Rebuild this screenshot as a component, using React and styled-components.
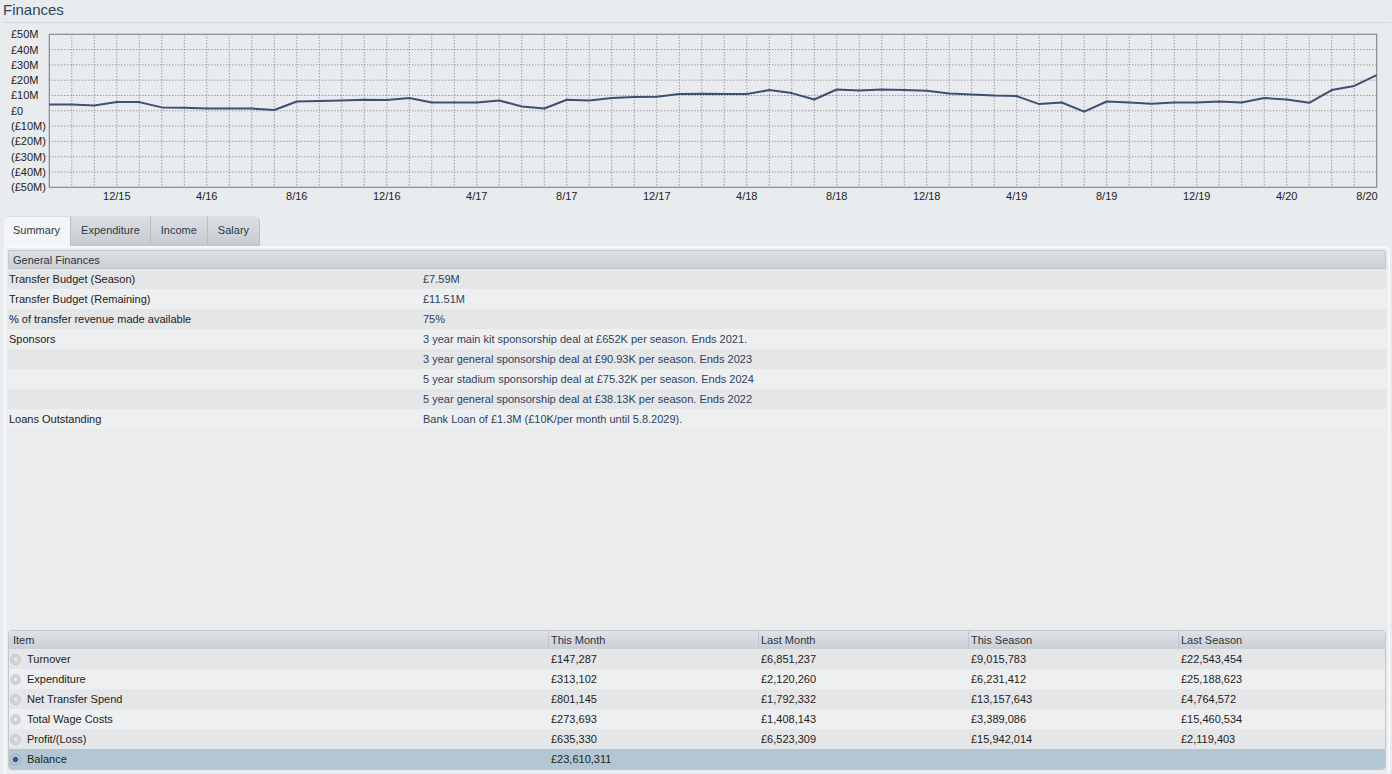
import React from 'react';
import styled, { createGlobalStyle } from 'styled-components';

const GlobalStyle = createGlobalStyle`
  html, body {
    margin: 0;
    padding: 0;
    background: #e9ecef;
  }
  body {
    font-family: "Liberation Sans", Arial, sans-serif;
    font-size: 11px;
    color: #222;
    overflow: hidden;
  }
`;

// month-end balance in £M, 9/15 .. 8/20
const history = [
  4.1, 4.1, 3.5, 5.7, 5.7, 2.2, 2.0, 1.5, 1.5, 1.5, 0.5, 6.1,
  6.5, 6.7, 7.2, 7.0, 8.3, 5.4, 5.4, 5.4, 6.7, 2.8, 1.5, 7.2,
  6.7, 8.3, 9.0, 9.2, 10.9, 11.1, 10.9, 10.9, 13.5, 11.6, 7.4, 13.9,
  13.3, 13.9, 13.5, 13.1, 11.3, 10.7, 10.0, 9.6, 4.4, 5.4, -0.5, 6.1,
  5.4, 4.6, 5.4, 5.4, 6.1, 5.4, 8.3, 7.4, 5.2, 13.5, 16.3, 23.3,
];

const yLabels = ['£50M', '£40M', '£30M', '£20M', '£10M', '£0', '(£10M)', '(£20M)', '(£30M)', '(£40M)', '(£50M)'];

const general = [
  ['Transfer Budget (Season)', '£7.59M'],
  ['Transfer Budget (Remaining)', '£11.51M'],
  ['% of transfer revenue made available', '75%'],
  ['Sponsors', '3 year main kit sponsorship deal at £652K per season. Ends 2021.'],
  ['', '3 year general sponsorship deal at £90.93K per season. Ends 2023'],
  ['', '5 year stadium sponsorship deal at £75.32K per season. Ends 2024'],
  ['', '5 year general sponsorship deal at £38.13K per season. Ends 2022'],
  ['Loans Outstanding', 'Bank Loan of £1.3M (£10K/per month until 5.8.2029).'],
];

const items = [
  ['Turnover', '£147,287', '£6,851,237', '£9,015,783', '£22,543,454'],
  ['Expenditure', '£313,102', '£2,120,260', '£6,231,412', '£25,188,623'],
  ['Net Transfer Spend', '£801,145', '£1,792,332', '£13,157,643', '£4,764,572'],
  ['Total Wage Costs', '£273,693', '£1,408,143', '£3,389,086', '£15,460,534'],
  ['Profit/(Loss)', '£635,330', '£6,523,309', '£15,942,014', '£2,119,403'],
  ['Balance', '£23,610,311', '', '', ''],
];

const Page = styled.div`
  width: 1392px;
  height: 774px;
  overflow: hidden;
`;

const TitleBar = styled.div`
  margin: 0 1px 0 3px;
  height: 22px;
  border-bottom: 1px solid #d3d8dd;
`;

const Title = styled.h1`
  margin: 0;
  font-size: 15px;
  font-weight: normal;
  line-height: 20px;
  color: #2f4561;
`;

const ChartSvg = styled.svg`
  display: block;
  width: 1392px;
  height: 193px;
  font-family: "Liberation Sans", Arial, sans-serif;
  font-size: 11px;
`;

const TabList = styled.div`
  display: flex;
  margin-left: 4px;
  height: 30px;
`;

const Tab = styled.div`
  height: 30px;
  line-height: 27px;
  padding: 0 10px;
  box-sizing: border-box;
  color: #2d3a4b;
  border-top: 1px solid #d9dde1;
  border-right: 1px solid #b9bfc6;
  background: ${p => (p.$active ? '#f4f5f6' : 'linear-gradient(#dcdfe3, #c7ccd1)')};
  border-bottom: ${p => (p.$active ? 'none' : '1px solid #c0c5cb')};
  &:first-child {
    padding-left: 9px;
    border-radius: 6px 0 0 0;
  }
  &:last-child {
    border-radius: 0 6px 0 0;
  }
`;

const Panel = styled.div`
  margin: 0 2px 0 4px;
  height: 530px;
  box-sizing: border-box;
  border: 2px solid #f7f8f9;
  border-radius: 0 6px 0 0;
  background: #eaeced;
  padding: 2px 2px 4px;
  display: flex;
  flex-direction: column;
`;

const SectionHead = styled.div`
  height: 19px;
  line-height: 18px;
  box-sizing: border-box;
  padding-left: 4px;
  background: linear-gradient(#dde0e4, #cbd0d6);
  border: 1px solid #c2c7cd;
  border-radius: 0 3px 0 0;
  color: #2a3340;
`;

const InfoBody = styled.div`
  display: flex;
  flex-direction: column;
`;

const InfoRow = styled.div`
  display: grid;
  grid-template-columns: 415px 1fr;
  height: 20px;
  line-height: 20px;
  background: #eeeff0;
  &:nth-child(odd) {
    background: #e4e6e8;
  }
`;

const InfoLabel = styled.div`
  padding-left: 1px;
  color: #222;
`;

const InfoValue = styled.div`
  color: #2f3f5c;
`;

const ItemsTable = styled.div`
  margin-top: auto;
  border: 1px solid #c3c8ce;
  border-radius: 4px;
  overflow: hidden;
`;

const cols = '539px 210px 210px 210px 1fr';

const HeadRow = styled.div`
  display: grid;
  grid-template-columns: ${cols};
  height: 18px;
  line-height: 18px;
  background: linear-gradient(#dfe2e6, #cbd0d6);
  border-bottom: 1px solid #c2c7cd;
  margin-bottom: -1px;
  color: #2a3340;
`;

const HeadCell = styled.div`
  padding-left: 2px;
  border-left: 1px solid #bfc5cc;
  &:first-child {
    border-left: none;
    padding-left: 4px;
  }
`;

const ItemRow = styled.div`
  display: grid;
  grid-template-columns: ${cols};
  height: 20px;
  line-height: 20px;
  background: ${p => (p.$selected ? '#b3c6d4' : p.$odd ? '#e4e6e8' : '#eeeff0')};
  color: #222;
`;

const ItemName = styled.div`
  display: flex;
  align-items: center;
  gap: 6px;
  padding-left: 1px;
  svg {
    display: block;
  }
`;

const ItemValue = styled.div`
  padding-left: 3px;
`;

function Radio({ checked }) {
  return (
    <svg width="11" height="11" viewBox="0 0 11 11">
      <circle cx="5.5" cy="5.5" r="4.8" fill="#e3e4e5" stroke={checked ? '#8596ab' : '#b3b5b8'} strokeWidth="1" />
      <circle
        cx="5.5"
        cy="5.5"
        r="2.6"
        fill={checked ? '#3a5a92' : '#ebeced'}
        stroke={checked ? '#3a5a92' : '#b9bbbe'}
        strokeWidth="1"
      />
    </svg>
  );
}

function FinanceChart() {
  const left = 49.3;
  const right = 1376.7;
  const top = 11.3;
  const bottom = 164.3;
  const w = right - left;
  const h = bottom - top;
  const xAt = k => left + (k * w) / (history.length - 1);
  const yAt = v => top + ((50 - v) / 100) * h;

  const months = ['12', '4', '8'];
  const xTicks = [];
  for (let i = 0; i < 14; i++) {
    const m = months[i % 3];
    const yr = 15 + Math.floor((i + 2) / 3);
    xTicks.push({ k: 3 + 4 * i, text: `${m}/${yr}` });
  }

  const points = history.map((v, k) => `${xAt(k).toFixed(1)},${yAt(v).toFixed(1)}`).join(' ');

  return (
    <ChartSvg viewBox="0 0 1392 193">
      {Array.from({ length: 58 }, (_, i) => (
        <line key={'v' + i} x1={xAt(i + 1)} x2={xAt(i + 1)} y1={top} y2={bottom} stroke="#777" strokeDasharray="1 2" />
      ))}
      {Array.from({ length: 9 }, (_, j) => (
        <line key={'h' + j} x1={left} x2={right} y1={top + ((j + 1) * h) / 10} y2={top + ((j + 1) * h) / 10} stroke="#777" strokeDasharray="1 2" />
      ))}
      <rect x={left} y={top} width={w} height={h} fill="none" stroke="#8a8a8a" strokeWidth="1.2" />
      {yLabels.map((t, j) => (
        <text key={t} x="11" y={top + (j * h) / 10} dy="0.36em" fill="#222">
          {t}
        </text>
      ))}
      {xTicks.map(t => (
        <text key={t.text} x={xAt(t.k)} y="176.5" textAnchor="middle" fill="#222">
          {t.text}
        </text>
      ))}
      <text x={right + 1} y="176.5" textAnchor="end" fill="#222">8/20</text>
      <polyline points={points} fill="none" stroke="#3c5171" strokeWidth="2" strokeLinejoin="round" />
    </ChartSvg>
  );
}

export default function App() {
  return (
    <Page>
      <GlobalStyle />
      <TitleBar>
        <Title>Finances</Title>
      </TitleBar>
      <FinanceChart />
      <TabList>
        <Tab $active>Summary</Tab>
        <Tab>Expenditure</Tab>
        <Tab>Income</Tab>
        <Tab>Salary</Tab>
      </TabList>
      <Panel>
        <SectionHead>General Finances</SectionHead>
        <InfoBody>
          {general.map(([label, value], i) => (
            <InfoRow key={i}>
              <InfoLabel>{label}</InfoLabel>
              <InfoValue>{value}</InfoValue>
            </InfoRow>
          ))}
        </InfoBody>
        <ItemsTable>
          <HeadRow>
            <HeadCell>Item</HeadCell>
            <HeadCell>This Month</HeadCell>
            <HeadCell>Last Month</HeadCell>
            <HeadCell>This Season</HeadCell>
            <HeadCell>Last Season</HeadCell>
          </HeadRow>
          {items.map(([name, ...vals], i) => (
            <ItemRow key={name} $odd={i % 2 === 0} $selected={name === 'Balance'}>
              <ItemName>
                <Radio checked={name === 'Balance'} />
                {name}
              </ItemName>
              {vals.map((v, j) => (
                <ItemValue key={j}>{v}</ItemValue>
              ))}
            </ItemRow>
          ))}
        </ItemsTable>
      </Panel>
    </Page>
  );
}
